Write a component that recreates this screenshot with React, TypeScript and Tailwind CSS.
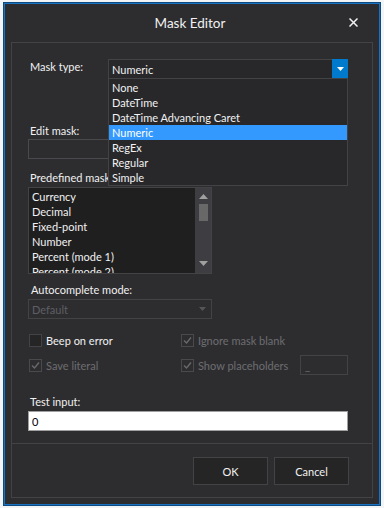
import React from "react";

const font = { fontFamily: 'Lato, "Noto Sans", sans-serif' };

function DisabledCheck({ label }: { label: string }) {
  return (
    <div className="flex items-center h-[15px] whitespace-nowrap">
      <div className="w-[13px] h-[13px] border border-[#4a4a4e] flex items-center justify-center shrink-0">
        <svg width="11" height="11" viewBox="0 0 11 11">
          <path d="M2 5.5 L4.5 8 L9 2.5" fill="none" stroke="#6a6a6e" strokeWidth="1.3" />
        </svg>
      </div>
      <span className="ml-[4px] text-[#6d6d70] leading-[15px]">{label}</span>
    </div>
  );
}

export default function App() {
  const items = ["None", "DateTime", "DateTime Advancing Caret", "Numeric", "RegEx", "Regular", "Simple"];
  const masks = ["Currency", "Decimal", "Fixed-point", "Number", "Percent (mode 1)", "Percent (mode 2)"];
  return (
    <div className="w-[384px] h-[508px] bg-[#f3f4f6] overflow-hidden relative text-[11px]" style={font}>
      <div className="ml-[4px] mt-[3px] w-[376px] h-[502px] border border-[#1a73c0] bg-[#2d2d30] flex flex-col shadow-[0_0_0_1px_#0d4a80]">
        {/* title bar */}
        <div className="h-[38px] shrink-0 relative flex items-center justify-center">
          <span className="text-[13.5px] text-[#f1f1f1] leading-[20px] mr-[4px]">Mask Editor</span>
          <svg className="absolute left-[344px] top-[14px]" width="9" height="9" viewBox="0 0 9 9">
            <path d="M0.5 0.5 L8.5 8.5 M8.5 0.5 L0.5 8.5" stroke="#f1f1f1" strokeWidth="1.5" />
          </svg>
        </div>
        {/* panel */}
        <div className="mx-[6px] border border-[#434346] flex flex-col text-[#f1f1f1]">
          <div className="pl-[16px] pt-[16px]">
            {/* mask type */}
            <div className="flex items-start h-[20px] w-[320px]">
              <span className="w-[80px] pl-[2px] leading-[15px]">Mask type:</span>
              <div className="relative flex-1 h-[20px]">
                <div className="h-[20px] border border-[#434346] bg-[#28282b] flex items-center">
                  <span className="pl-[3px] leading-[15px] flex-1">Numeric</span>
                  <div className="w-[16px] h-[20px] -mr-[1px] -my-[1px] bg-[#007acc] flex items-center justify-center">
                    <svg width="7" height="4" viewBox="0 0 7 4"><path d="M0 0 L7 0 L3.5 4 Z" fill="#ffffff" /></svg>
                  </div>
                </div>
                <div className="absolute left-0 right-0 top-[19px] border border-[#434346] bg-[#28282b] pt-[1px] z-10">
                  {items.map((it) => (
                    <div
                      key={it}
                      className={
                        "h-[15px] leading-[15px] pl-[3px] whitespace-nowrap " + (it === "Numeric" ? "bg-[#3399ff] text-white" : "")
                      }
                    >
                      {it}
                    </div>
                  ))}
                </div>
              </div>
            </div>
            {/* edit mask */}
            <div className="mt-[44px] h-[15px] leading-[15px] pl-[2px]">Edit mask:</div>
            <div className="mt-[1px] w-[320px] h-[20px] border border-[#4a4a4e] bg-[#2d2d30]"></div>
            {/* predefined */}
            <div className="mt-[11px] h-[15px] leading-[15px] pl-[2px]">Predefined masks:</div>
            <div className="mt-[2px] w-[184px] h-[87px] border border-[#434346] bg-[#1f1f20] flex overflow-hidden">
              <div className="flex-1 pl-[3px] pt-[1px]">
                {masks.map((m) => (
                  <div key={m} className="h-[15px] leading-[15px] whitespace-nowrap">
                    {m}
                  </div>
                ))}
              </div>
              <div className="w-[16px] bg-[#3e3e42] flex flex-col items-center">
                <svg className="mt-[6px]" width="9" height="5" viewBox="0 0 9 5"><path d="M0 5 L9 5 L4.5 0 Z" fill="#a0a0a0" /></svg>
                <div className="mt-[5px] w-[9px] h-[17px] bg-[#686868]"></div>
                <div className="flex-1"></div>
                <svg className="mb-[7px]" width="9" height="5" viewBox="0 0 9 5"><path d="M0 0 L9 0 L4.5 5 Z" fill="#a0a0a0" /></svg>
              </div>
            </div>
            {/* autocomplete */}
            <div className="mt-[8px] h-[15px] leading-[15px] pl-[3px]">Autocomplete mode:</div>
            <div className="mt-[2px] w-[184px] h-[20px] border border-[#434346] flex items-center">
              <span className="flex-1 pl-[3px] leading-[15px] text-[#5f5f63]">Default</span>
              <svg className="mr-[5px]" width="7" height="4" viewBox="0 0 7 4"><path d="M0 0 L7 0 L3.5 4 Z" fill="#555558" /></svg>
            </div>
            {/* checkboxes */}
            <div className="mt-[14px] flex w-[320px]">
              <div className="w-[153px] flex items-center h-[15px] pl-[1px]">
                <div className="w-[13px] h-[13px] border border-[#434346] bg-[#252526]"></div>
                <span className="ml-[4px] leading-[15px]">Beep on error</span>
              </div>
              <DisabledCheck label="Ignore mask blank" />
            </div>
            <div className="mt-[7px] flex w-[320px] h-[20px] items-center">
              <div className="w-[153px] pl-[1px]">
                <DisabledCheck label="Save literal" />
              </div>
              <DisabledCheck label="Show placeholders" />
              <div className="flex-1"></div>
              <div className="w-[48px] h-[20px] border border-[#434346] flex items-center pl-[4px] text-[#6d6d70] leading-[15px]">
                _
              </div>
            </div>
            {/* test input */}
            <div className="mt-[19px] h-[15px] leading-[15px] pl-[2px]">Test input:</div>
            <div className="mt-[2px] w-[320px] h-[20px] border border-[#a0a0a0] bg-white text-black flex items-center pl-[3px] leading-[15px]">
              0
            </div>
          </div>
          <div className="mt-[12px] border-t border-[#434346]"></div>
          <div className="flex justify-end pr-[23px] pt-[13px] pb-[12px] gap-[6px]">
            <div className="w-[75px] h-[28px] bg-[#252526] border border-[#434346] flex items-center justify-center leading-[15px]">
              OK
            </div>
            <div className="w-[75px] h-[28px] bg-[#252526] border border-[#434346] flex items-center justify-center leading-[15px]">
              Cancel
            </div>
          </div>
        </div>
      </div>
    </div>
  );
}
